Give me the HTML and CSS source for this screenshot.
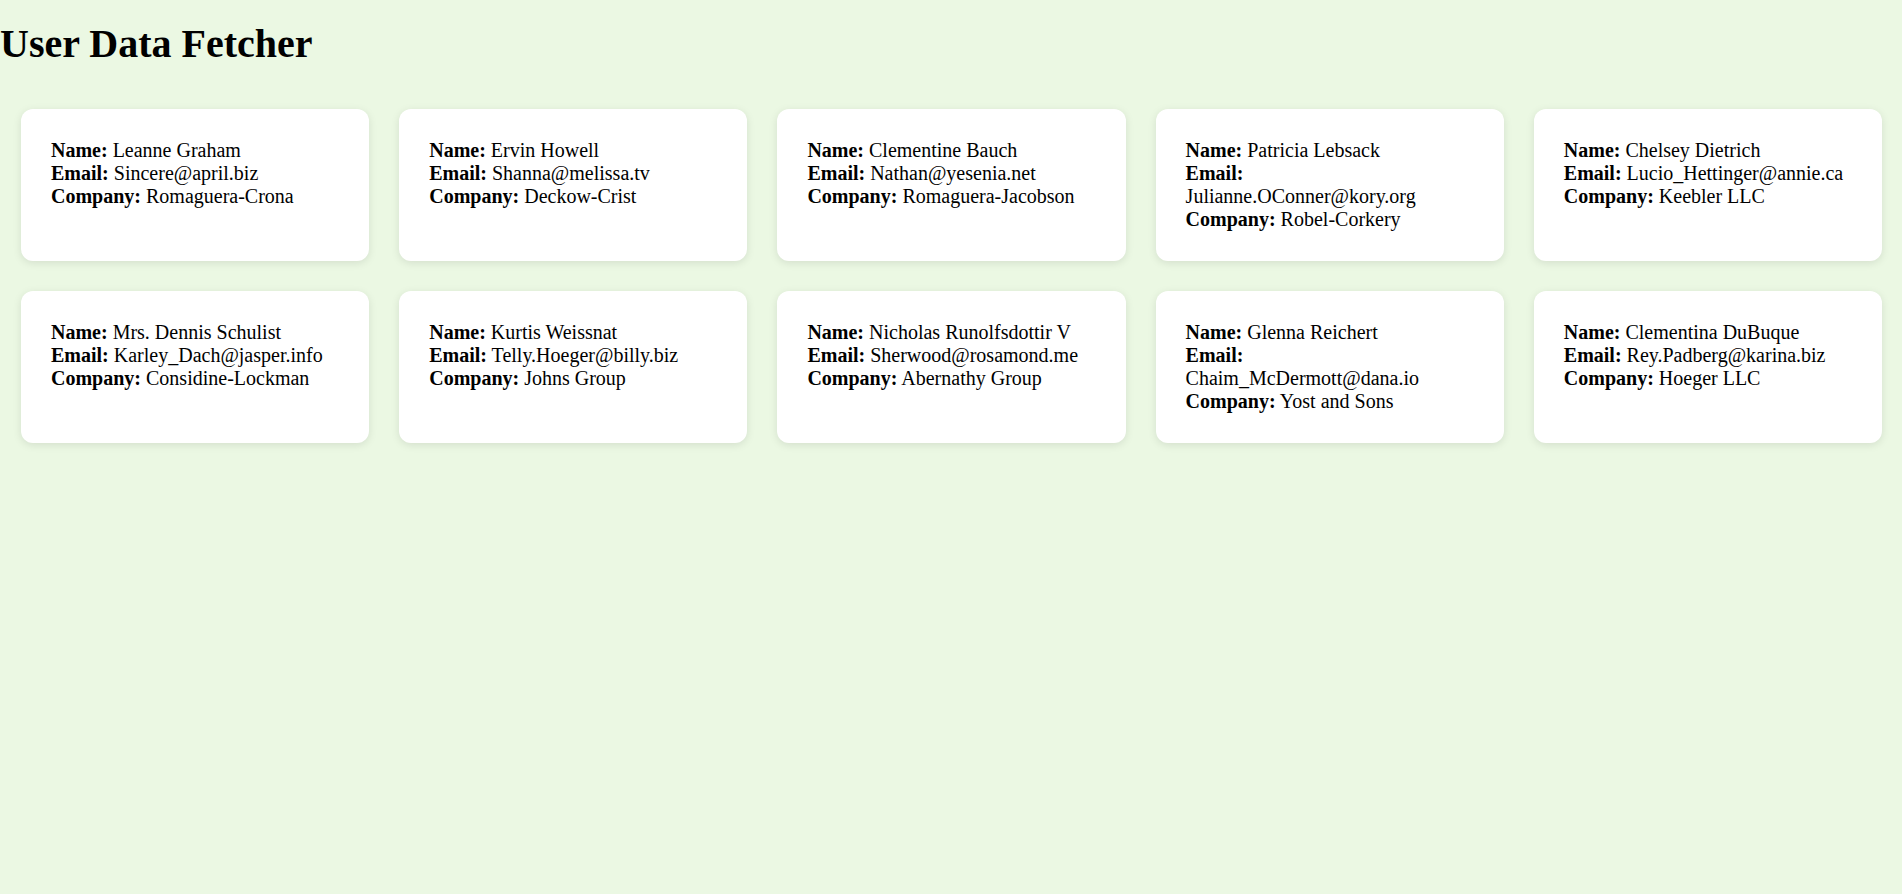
FILE: index.html
```html
<!DOCTYPE html>
<html>
<head>
<meta charset="utf-8">
<title>User Data Fetcher</title>
<link rel="stylesheet" href="styles.css">
</head>
<body>
<h1 class="title">User Data Fetcher</h1>
<div class="grid">
  <div class="card"><p><strong>Name:</strong> Leanne Graham</p><p><strong>Email:</strong> Sincere@april.biz</p><p><strong>Company:</strong> Romaguera-Crona</p></div>
  <div class="card"><p><strong>Name:</strong> Ervin Howell</p><p><strong>Email:</strong> Shanna@melissa.tv</p><p><strong>Company:</strong> Deckow-Crist</p></div>
  <div class="card"><p><strong>Name:</strong> Clementine Bauch</p><p><strong>Email:</strong> Nathan@yesenia.net</p><p><strong>Company:</strong> Romaguera-Jacobson</p></div>
  <div class="card"><p><strong>Name:</strong> Patricia Lebsack</p><p><strong>Email:</strong> Julianne.OConner@kory.org</p><p><strong>Company:</strong> Robel-Corkery</p></div>
  <div class="card"><p><strong>Name:</strong> Chelsey Dietrich</p><p><strong>Email:</strong> Lucio_Hettinger@annie.ca</p><p><strong>Company:</strong> Keebler LLC</p></div>
  <div class="card"><p><strong>Name:</strong> Mrs. Dennis Schulist</p><p><strong>Email:</strong> Karley_Dach@jasper.info</p><p><strong>Company:</strong> Considine-Lockman</p></div>
  <div class="card"><p><strong>Name:</strong> Kurtis Weissnat</p><p><strong>Email:</strong> Telly.Hoeger@billy.biz</p><p><strong>Company:</strong> Johns Group</p></div>
  <div class="card"><p><strong>Name:</strong> Nicholas Runolfsdottir V</p><p><strong>Email:</strong> Sherwood@rosamond.me</p><p><strong>Company:</strong> Abernathy Group</p></div>
  <div class="card"><p><strong>Name:</strong> Glenna Reichert</p><p><strong>Email:</strong> Chaim_McDermott@dana.io</p><p><strong>Company:</strong> Yost and Sons</p></div>
  <div class="card"><p><strong>Name:</strong> Clementina DuBuque</p><p><strong>Email:</strong> Rey.Padberg@karina.biz</p><p><strong>Company:</strong> Hoeger LLC</p></div>
</div>
</body>
</html>
```

FILE: styles.css
```css
html, body {
  margin: 0;
  padding: 0;
}
body {
  background: #ebf8e3;
  font-family: "Liberation Serif", "Times New Roman", serif;
  font-size: 20px;
  color: #000;
}
.title {
  font-size: 40px;
  font-weight: bold;
  margin: 21.44px 0;
  line-height: 46px;
}
.grid {
  display: grid;
  grid-template-columns: repeat(5, 1fr);
  gap: 30px;
  padding: 20px 20px 20px 21px;
}
.card {
  background: #fff;
  border-radius: 12px;
  padding: 30px;
  box-shadow: 0 2px 8px rgba(0, 0, 0, 0.1);
  line-height: 23px;
}
.card p {
  margin: 0;
}
```
